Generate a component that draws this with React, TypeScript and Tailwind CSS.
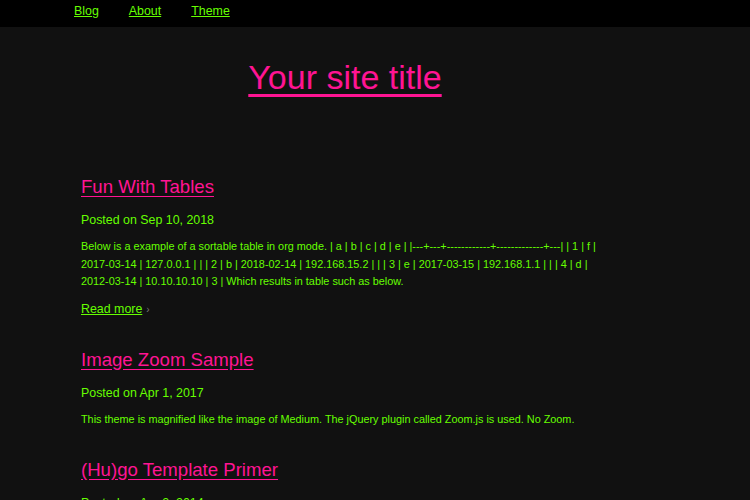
const posts = [
  {
    title: "Fun With Tables",
    date: "Sep 10, 2018",
    summary:
      "Below is a example of a sortable table in org mode. | a | b | c | d | e | |---+---+------------+-------------+---| | 1 | f | 2017-03-14 | 127.0.0.1 | | | 2 | b | 2018-02-14 | 192.168.15.2 | | | 3 | e | 2017-03-15 | 192.168.1.1 | | | 4 | d | 2012-03-14 | 10.10.10.10 | 3 | Which results in table such as below.",
    more: true,
  },
  {
    title: "Image Zoom Sample",
    date: "Apr 1, 2017",
    summary:
      "This theme is magnified like the image of Medium. The jQuery plugin called Zoom.js is used. No Zoom.",
    more: false,
  },
  {
    title: "(Hu)go Template Primer",
    date: "Apr 2, 2014",
    summary: "",
    more: false,
  },
];

export default function App() {
  return (
    <div
      className="min-h-screen bg-[#111111] text-[#66ff00]"
      style={{ fontFamily: '"Liberation Sans", Arial, sans-serif' }}
    >
      <nav className="h-[27px] bg-black">
        <ul className="flex gap-[30px] pl-[74px] pt-[3px] text-[12.4px] leading-[17px]">
          {["Blog", "About", "Theme"].map((l) => (
            <li key={l}>
              <a href="#" className="underline text-[#66ff00]">
                {l}
              </a>
            </li>
          ))}
        </ul>
      </nav>

      <main className="w-[528px] ml-[81px]">
        <header className="pt-[30px] pb-[79px] text-center">
          <a href="#" className="text-[34px] leading-[40px] text-[#ff1493] underline underline-offset-[5px]">
            Your site title
          </a>
        </header>

        {posts.map((p) => (
          <article key={p.title} className="mb-[31px]">
            <h2 className="text-[18.6px] leading-[22px]">
              <a href="#" className="text-[#ff1493] underline underline-offset-[3px]">
                {p.title}
              </a>
            </h2>
            <p className="mt-[14px] text-[12.4px] leading-[17px]">Posted on {p.date}</p>
            {p.summary && (
              <p className="mt-[9px] text-[10.85px] leading-[17.5px]">{p.summary}</p>
            )}
            {p.more && (
              <p className="mt-[10px] mb-[1px] text-[12.4px] leading-[17px]">
                <a href="#" className="underline text-[#66ff00]">
                  Read more
                </a>
                <span className="ml-[4px] text-[10px] text-[#777]">›</span>
              </p>
            )}
          </article>
        ))}
      </main>
    </div>
  );
}
